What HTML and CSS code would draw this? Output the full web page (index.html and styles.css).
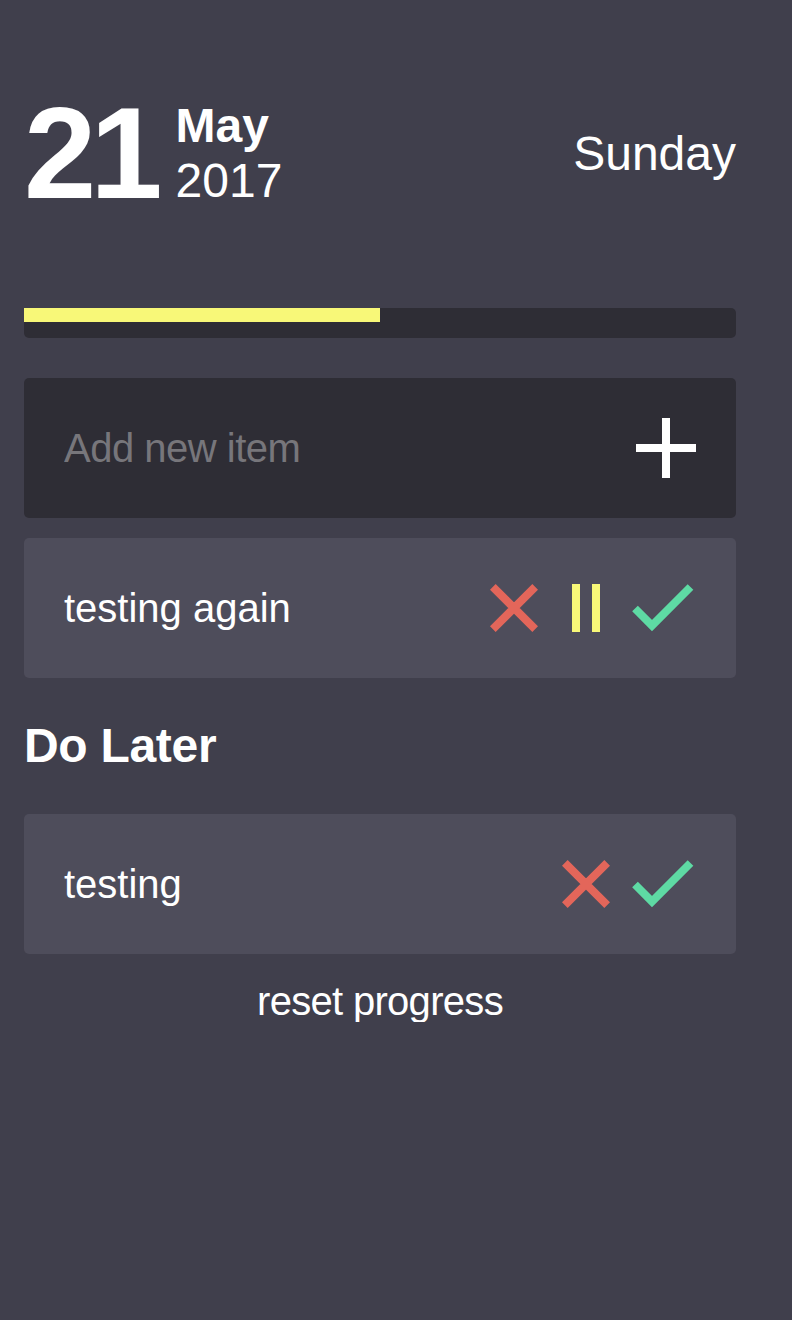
FILE: index.html
```html
<!DOCTYPE html>
<html lang="en">
<head>
<meta charset="utf-8">
<title>Todo</title>
<link rel="stylesheet" href="styles.css">
</head>
<body>
<div class="app">
  <header class="header">
    <div class="date">
      <div class="day">21</div>
      <div class="month-year">
        <div class="month">May</div>
        <div class="year">2017</div>
      </div>
    </div>
    <div class="weekday">Sunday</div>
  </header>

  <div class="progress">
    <div class="progress-fill" style="width: 50%"></div>
  </div>

  <form class="add-item">
    <input class="add-input" type="text" placeholder="Add new item">
    <button class="add-btn" type="button" aria-label="Add">
      <svg width="60" height="60" viewBox="0 0 60 60"><rect x="26" y="0" width="8" height="60" fill="#fff"/><rect x="0" y="26" width="60" height="8" fill="#fff"/></svg>
    </button>
  </form>

  <ul class="list">
    <li class="item">
      <span class="item-text">testing again</span>
      <div class="actions">
        <button class="btn btn-delete" type="button" aria-label="Delete">
          <svg width="48" height="48" viewBox="0 0 48 48"><path d="M2.83 2.83L45.17 45.17M45.17 2.83L2.83 45.17" stroke="#e3665a" stroke-width="8" fill="none"/></svg>
        </button>
        <button class="btn btn-pause" type="button" aria-label="Do later">
          <svg width="28" height="48" viewBox="0 0 28 48"><rect x="0" y="0" width="8" height="48" fill="#f8f878"/><rect x="20" y="0" width="8" height="48" fill="#f8f878"/></svg>
        </button>
        <button class="btn btn-done" type="button" aria-label="Done">
          <svg width="62" height="48" viewBox="0 0 62 48"><polyline points="3,24.5 20,41.5 58.5,3" stroke="#5edaa4" stroke-width="8" fill="none" stroke-linejoin="miter"/></svg>
        </button>
      </div>
    </li>
  </ul>

  <h2 class="section-title">Do Later</h2>

  <ul class="list">
    <li class="item">
      <span class="item-text">testing</span>
      <div class="actions">
        <button class="btn btn-delete" type="button" aria-label="Delete">
          <svg width="48" height="48" viewBox="0 0 48 48"><path d="M2.83 2.83L45.17 45.17M45.17 2.83L2.83 45.17" stroke="#e3665a" stroke-width="8" fill="none"/></svg>
        </button>
        <button class="btn btn-done" type="button" aria-label="Done">
          <svg width="62" height="48" viewBox="0 0 62 48"><polyline points="3,24.5 20,41.5 58.5,3" stroke="#5edaa4" stroke-width="8" fill="none" stroke-linejoin="miter"/></svg>
        </button>
      </div>
    </li>
  </ul>

  <div class="reset">reset progress</div>
</div>
</body>
</html>
```

FILE: styles.css
```css
html, body {
  margin: 0;
  padding: 0;
  background: #403f4c;
  color: #ffffff;
  font-family: "Liberation Sans", Arial, Helvetica, sans-serif;
}

.app {
  width: 712px;
  padding: 88px 24px 0;
}

.header {
  display: flex;
  align-items: center;
  justify-content: space-between;
}

.date {
  display: flex;
  align-items: center;
}

.day {
  font-size: 130px;
  font-weight: 700;
  line-height: 130px;
  letter-spacing: -6px;
}

.month-year {
  margin-left: 19px;
  font-size: 48px;
  line-height: 55px;
}

.month {
  font-weight: 700;
}

.year {
  font-weight: 400;
}

.weekday {
  font-size: 48px;
  line-height: 55px;
}

.progress {
  margin-top: 90px;
  height: 30px;
  background: #2e2d35;
  border-radius: 5px;
}

.progress-fill {
  height: 14px;
  background: #f8f878;
}

.add-item {
  margin: 40px 0 0;
  height: 140px;
  box-sizing: border-box;
  padding: 0 40px;
  background: #2e2d35;
  border-radius: 5px;
  display: flex;
  align-items: center;
  justify-content: space-between;
}

.add-input {
  flex: 1;
  background: transparent;
  border: none;
  outline: none;
  padding: 0;
  margin: 0;
  color: #ffffff;
  font-family: "Liberation Sans", Arial, sans-serif;
  font-size: 40px;
  letter-spacing: -0.5px;
}

.add-input::placeholder {
  color: #77767b;
  opacity: 1;
}

.add-btn {
  display: flex;
  padding: 0;
  border: none;
  background: none;
}

.list {
  list-style: none;
  margin: 20px 0 0;
  padding: 0;
}

.item {
  height: 140px;
  box-sizing: border-box;
  padding: 0 42px 0 40px;
  background: #4e4d5b;
  border-radius: 5px;
  display: flex;
  align-items: center;
  justify-content: space-between;
}

.item-text {
  font-size: 40px;
}

.actions {
  display: flex;
  align-items: center;
}

.btn {
  display: flex;
  padding: 0;
  border: none;
  background: none;
}

.btn-delete + .btn-pause {
  margin-left: 34px;
}

.btn-pause + .btn-done {
  margin-left: 32px;
}

.btn-delete + .btn-done {
  margin-left: 22px;
}

.section-title {
  margin: 40px 0 0;
  font-size: 48px;
  line-height: 56px;
  font-weight: 700;
  letter-spacing: -0.3px;
}

.section-title + .list {
  margin-top: 40px;
}

.reset {
  margin-top: 26px;
  text-align: center;
  font-size: 40px;
  line-height: 42px;
  letter-spacing: -0.7px;
}
```
